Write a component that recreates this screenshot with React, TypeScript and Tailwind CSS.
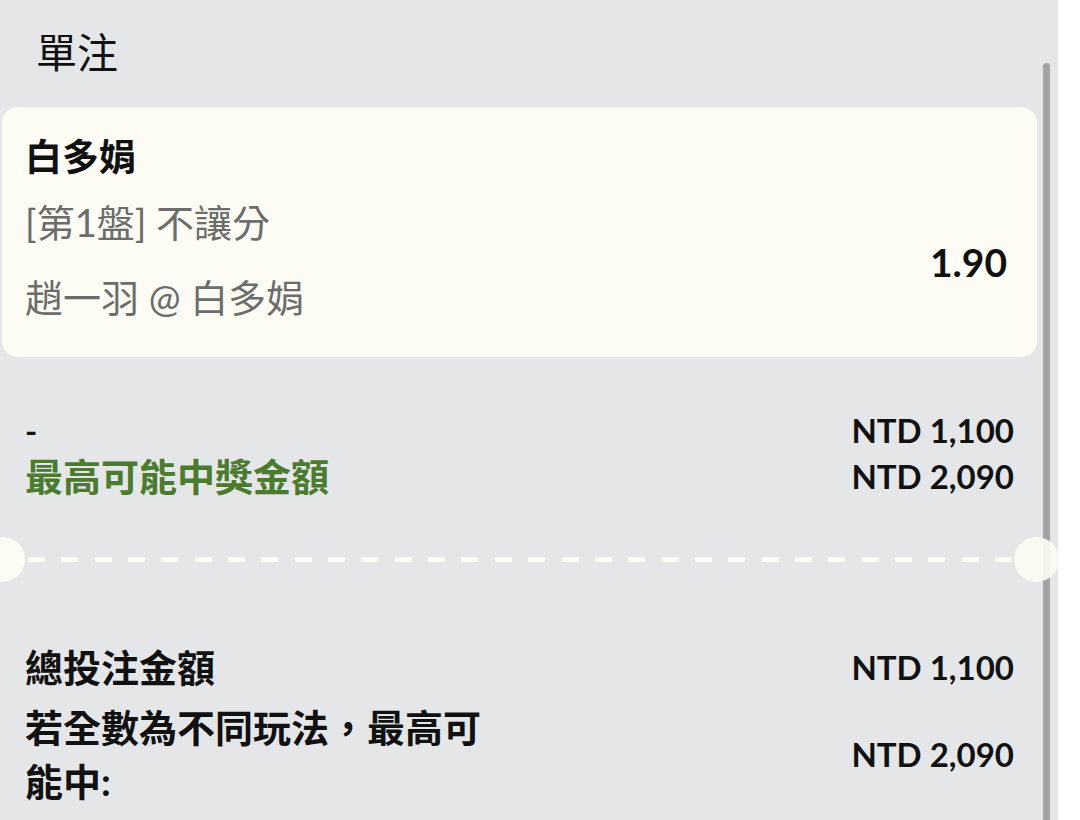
const FONT = "font-['Lato','Noto_Sans_CJK_TC',sans-serif]"

const DASHES = Array.from({ length: 30 }, (_, i) => i)

export default function App() {
  return (
    <div className={`flex w-full h-[820px] overflow-hidden bg-white ${FONT}`}>
      {/* ── BET SLIP PANEL ── */}
      <div className="relative w-[1058px] shrink-0 bg-[#e5e6e8] text-[#111]">
        {/* scrollbar thumb */}
        <div className="absolute left-[1043px] top-[63px] w-[7px] h-[800px] rounded-t-full bg-[#9b9b9b] z-10 opacity-90" />

        <div className="pl-[36px] pt-[33px] text-[41px] leading-[40px]">單注</div>

        <div className="pl-[2px] pr-[21px]">
          {/* selection card */}
          <div className="mt-[34px] flex justify-between rounded-[16px] bg-[#fcfcf4] px-[23px] pt-[30px] pb-[40px]">
            <div>
              <div className="text-[37px] leading-[40px] font-bold">白多娟</div>
              <div className="mt-[25px] text-[38px] leading-[40px] text-[#6c6c6c]">[第1盤] 不讓分</div>
              <div className="mt-[35px] text-[38px] leading-[40px] text-[#6c6c6c]">趙一羽 @ 白多娟</div>
            </div>
            <div className="mt-[105px] pr-[7px] text-[39px] leading-[40px] font-bold">1.90</div>
          </div>

          {/* stake rows */}
          <div className="mt-[50px] px-[23px] font-bold">
            <div className="flex justify-between leading-[46px]">
              <span className="text-[33px]">-</span>
              <span className="text-[33px]">NTD 1,100</span>
            </div>
            <div className="flex justify-between leading-[46px]">
              <span className="text-[38px] text-[#4b7b2f]">最高可能中獎金額</span>
              <span className="text-[33px]">NTD 2,090</span>
            </div>
          </div>

          {/* ticket perforation */}
          <div className="relative mt-[38px] h-[45px]">
            <div className="absolute left-[-22px] top-0 w-[45px] h-[45px] rounded-full bg-[#fcfcf2]" />
            <div className="absolute right-[-22px] top-0 w-[45px] h-[45px] rounded-full bg-[#fcfcf2] z-20 opacity-90" />
            <div className="flex h-full items-center justify-between pl-[26px] pr-[25px]">
              {DASHES.map(i => (
                <span key={i} className="w-[17px] h-[5px] bg-[#fcfcf2]" />
              ))}
            </div>
          </div>

          {/* totals */}
          <div className="mt-[58px] px-[23px] font-bold">
            <div className="flex justify-between items-center leading-[54px]">
              <span className="text-[38px]">總投注金額</span>
              <span className="text-[33px]">NTD 1,100</span>
            </div>
            <div className="mt-[6px] flex justify-between items-center">
              <span className="w-[475px] text-[38px] leading-[54px]">若全數為不同玩法，最高可能中:</span>
              <span className="text-[33px] leading-[54px]">NTD 2,090</span>
            </div>
          </div>
        </div>
      </div>
    </div>
  )
}
